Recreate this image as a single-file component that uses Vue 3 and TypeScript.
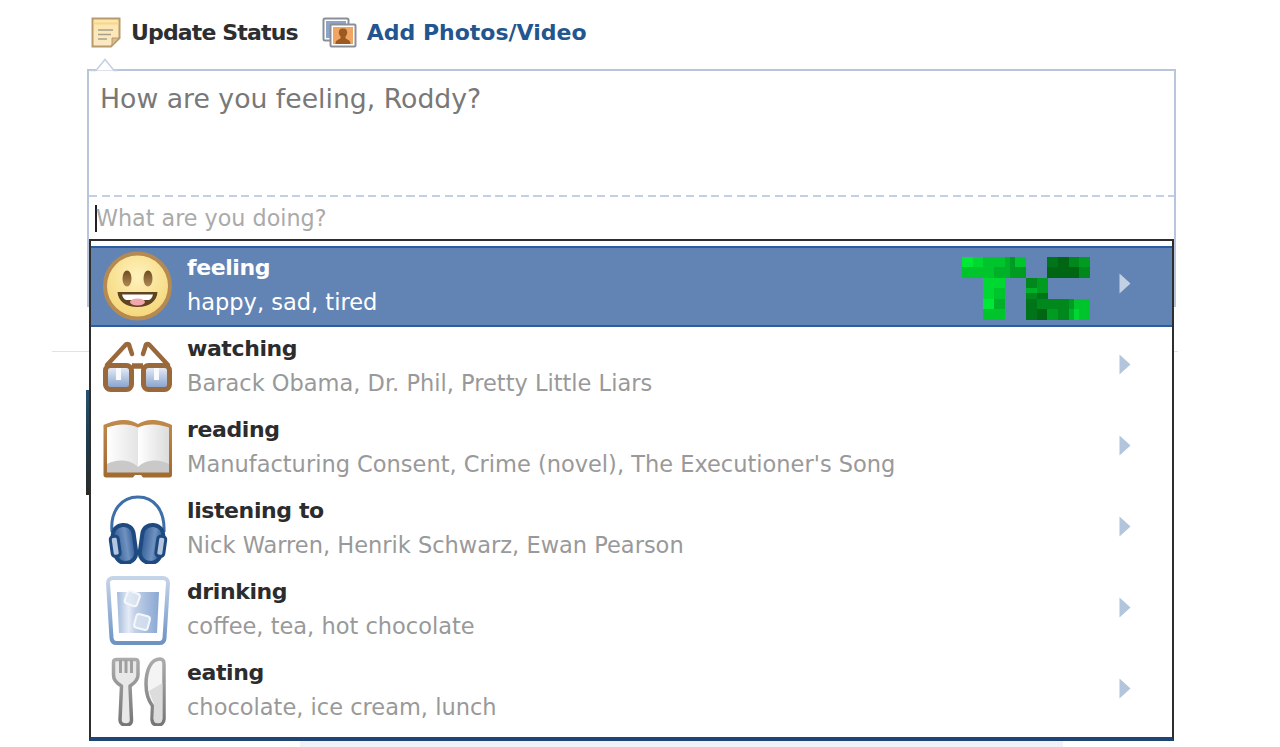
<script setup lang="ts">
interface Row {
  key: string
  title: string
  sub: string
}

const rows: Row[] = [
  { key: 'feeling', title: 'feeling', sub: 'happy, sad, tired' },
  { key: 'watching', title: 'watching', sub: 'Barack Obama, Dr. Phil, Pretty Little Liars' },
  { key: 'reading', title: 'reading', sub: "Manufacturing Consent, Crime (novel), The Executioner's Song" },
  { key: 'listening', title: 'listening to', sub: 'Nick Warren, Henrik Schwarz, Ewan Pearson' },
  { key: 'drinking', title: 'drinking', sub: 'coffee, tea, hot chocolate' },
  { key: 'eating', title: 'eating', sub: 'chocolate, ice cream, lunch' },
]

interface Cell {
  x: number
  y: number
  fill: string
}

const shades = ['#00e836', '#00d832', '#00c42c', '#00b028', '#009c22', '#00881d', '#007418', '#006614']

function zoneBase(c: number, r: number): number {
  if (c < 12) return c < 6 ? 1 : c > 8 ? 3 : 2
  if (c < 16) return r > 6 ? 6 : 4
  if (r < 4) return c > 21 ? 4 : 6
  return c > 20 ? 2 : 4
}

function inLogo(c: number, r: number): boolean {
  if (c < 12 && r < 4) return true
  if (c >= 4 && c < 8 && r >= 4) return true
  if (c >= 12 && c < 16 && r >= 4) return true
  if (c >= 16 && c < 24 && r < 4) return true
  if (c >= 16 && c < 24 && r >= 8) return true
  return false
}

const tcCells: Cell[] = []
for (let r = 0; r < 12; r++) {
  for (let c = 0; c < 24; c++) {
    if (!inLogo(c, r)) continue
    const bc = Math.floor(c / 2)
    const br = Math.floor(r / 2)
    const noise = ((bc * 7 + br * 13 + ((bc * br) % 5) * 3) % 5) - 2
    const i = Math.max(0, Math.min(7, zoneBase(c, r) + (noise > 0 ? 1 : noise < -1 ? -1 : 0)))
    tcCells.push({ x: c * 5.34, y: r * 5.2, fill: shades[i] })
  }
}
</script>

<template>
  <div class="page">
    <div class="tabs">
      <svg class="tab-icon" width="30" height="31" viewBox="0 0 30 31">
        <defs>
          <linearGradient id="noteFill" x1="0" y1="0" x2="0" y2="1">
            <stop offset="0" stop-color="#fde6a8" />
            <stop offset="1" stop-color="#fbe9c6" />
          </linearGradient>
        </defs>
        <path d="M1.500 1.500H28.500V21L20 29.500H1.500Z" fill="url(#noteFill)" stroke="#b99a6c" stroke-width="2" />
        <path d="M2.500 6.500H27.500" stroke="#f5d68c" stroke-width="2" />
        <path d="M7 13H22M7 17.500H20M7 22H16" stroke="#a89f8e" stroke-width="1.600" />
        <path d="M28 21H21V28.500Z" fill="#d9bd8a" stroke="#b99a6c" stroke-width="1" />
      </svg>
      <span class="tab active">Update Status</span>
      <svg class="tab-icon second" width="35" height="31" viewBox="0 0 35 31">
        <rect x="1.500" y="1.500" width="25" height="22" rx="1.500" fill="#fff" stroke="#8b8f95" stroke-width="2" />
        <rect x="4" y="4" width="20" height="17" fill="#8ea3c8" />
        <rect x="8.500" y="7.500" width="25" height="22" rx="1" fill="#fff" stroke="#8b8f95" stroke-width="2" />
        <rect x="11" y="10" width="20" height="17" fill="#f0a562" />
        <path d="M13.500 27C13.500 23 16.500 22.500 18.500 21.500V19.500C17 18 16.500 16 17 14C17.500 12 19 11.500 21 11.500C23 11.500 24.500 12 25 14C25.500 16 25 18 23.500 19.500V21.500C25.500 22.500 28.500 23 28.500 27Z" fill="#9a5a22" />
      </svg>
      <span class="tab link">Add Photos/Video</span>
    </div>

    <div class="composer">
      <svg class="notch" width="28" height="14" viewBox="0 0 28 14">
        <path d="M0 12.500H6L15 1.500L24 12.500H28" fill="#fff" stroke="#c3cfe2" stroke-width="1.500" />
      </svg>
      <div class="status-area">How are you feeling, Roddy?</div>
      <div class="dashes"></div>
      <div class="doing-area">
        <span class="caret"></span>
        <span class="doing-text">What are you doing?</span>
      </div>
    </div>

    <div class="rule"></div>
    <div class="photo-edge"></div>
    <div class="foot-band"></div>

    <div class="menu">
      <div v-for="row in rows" :key="row.key" class="row" :class="{ selected: row.key === 'feeling' }">
        <svg class="row-icon" width="70" height="70" viewBox="0 0 70 70">
          <template v-if="row.key === 'feeling'">
            <defs>
              <radialGradient id="faceFill" cx="0.5" cy="0.35" r="0.65">
                <stop offset="0" stop-color="#fff2bd" />
                <stop offset="1" stop-color="#f5d678" />
              </radialGradient>
              <linearGradient id="eyeFill" x1="0" y1="0" x2="0" y2="1">
                <stop offset="0" stop-color="#6e4c22" />
                <stop offset="1" stop-color="#b08a52" />
              </linearGradient>
            </defs>
            <circle cx="35.500" cy="35" r="32.500" fill="url(#faceFill)" stroke="#b48a52" stroke-width="4" />
            <ellipse cx="25" cy="27.500" rx="4.500" ry="8" fill="url(#eyeFill)" />
            <ellipse cx="46" cy="27.500" rx="4.500" ry="8" fill="url(#eyeFill)" />
            <path d="M15.500 41H55.500C55 50 47 56 35.500 56C24 56 16 50 15.500 41Z" fill="#5f4420" />
            <path d="M20 43.500H51C50 47 49 48 47 49H24C22 48 21 47 20 43.500Z" fill="#fff" />
            <ellipse cx="35.500" cy="51" rx="7.500" ry="3.500" fill="#f2a7ad" />
          </template>

          <template v-else-if="row.key === 'watching'">
            <defs>
              <linearGradient id="lensFill" x1="0" y1="0" x2="0" y2="1">
                <stop offset="0" stop-color="#eef2f9" />
                <stop offset="1" stop-color="#7f9dcb" />
              </linearGradient>
            </defs>
            <path d="M5 33L23 13.500C25 11 27.500 12 27.500 14.500L30 22M66 33L48 13.500C46 11 43.500 12 43.500 14.500L41 22" fill="none" stroke="#99693c" stroke-width="4.500" stroke-linecap="round" stroke-linejoin="round" />
            <rect x="3.500" y="33.500" width="26" height="24" rx="5" fill="url(#lensFill)" stroke="#99693c" stroke-width="5" />
            <rect x="41.500" y="33.500" width="26" height="24" rx="5" fill="url(#lensFill)" stroke="#99693c" stroke-width="5" />
            <path d="M14 36H19V48H14ZM52 36H57V48H52Z" fill="#f8fafd" />
            <path d="M30 34H41" stroke="#99693c" stroke-width="5.500" />
          </template>

          <template v-else-if="row.key === 'reading'">
            <defs>
              <linearGradient id="bookEdge" x1="0" y1="0" x2="0" y2="1">
                <stop offset="0" stop-color="#c08a4c" />
                <stop offset="1" stop-color="#a06a30" />
              </linearGradient>
              <linearGradient id="pageLeft" x1="0" y1="0" x2="1" y2="0">
                <stop offset="0" stop-color="#fff" />
                <stop offset="1" stop-color="#e4e4e4" />
              </linearGradient>
              <linearGradient id="pageRight" x1="0" y1="0" x2="1" y2="0">
                <stop offset="0" stop-color="#fff" />
                <stop offset="1" stop-color="#dcdcdc" />
              </linearGradient>
            </defs>
            <path d="M1.500 12C8 9.500 12 7.500 20 7C27 6.500 32 8.500 36 11C40 8.500 45 6.500 52 7C60 7.500 64 9.500 70 12V62C70 63.500 69 64.500 67.500 64.500H41L39 62H33L31 64.500H4C2.500 64.500 1.500 63.500 1.500 62Z" fill="url(#bookEdge)" />
            <path d="M5 14.500C12 12 26 9 36 14.500V58.500H5Z" fill="url(#pageLeft)" />
            <path d="M36 14.500C46 9 60 12 67 14.500V58.500H36Z" fill="url(#pageRight)" />
            <path d="M5 51C14 46 28 46 36 54C44 46 58 46 67 51V59.500H5Z" fill="#c9c9c9" />
          </template>

          <template v-else-if="row.key === 'listening'">
            <defs>
              <linearGradient id="cupFill" x1="0" y1="0" x2="1" y2="0">
                <stop offset="0" stop-color="#2f5c96" />
                <stop offset="0.6" stop-color="#7092c0" />
                <stop offset="1" stop-color="#2f5c96" />
              </linearGradient>
            </defs>
            <path d="M10 38C8 16 20 3 36 3C52 3 63 16 62 38" fill="none" stroke="#3f6fa8" stroke-width="3" />
            <g transform="rotate(-8 22 50)">
              <rect x="12" y="31" width="21" height="38" rx="10" fill="url(#cupFill)" stroke="#1f4a80" stroke-width="4" />
              <rect x="9" y="41" width="8" height="20" rx="3" fill="#b4c6e0" stroke="#1f4a80" stroke-width="3" />
            </g>
            <g transform="rotate(8 50 50)">
              <rect x="39" y="31" width="21" height="38" rx="10" fill="url(#cupFill)" stroke="#1f4a80" stroke-width="4" />
              <rect x="55" y="41" width="8" height="20" rx="3" fill="#b4c6e0" stroke="#1f4a80" stroke-width="3" />
            </g>
          </template>

          <template v-else-if="row.key === 'drinking'">
            <defs>
              <linearGradient id="glassEdge" x1="0" y1="0" x2="0" y2="1">
                <stop offset="0" stop-color="#c5d4e9" />
                <stop offset="1" stop-color="#6d93c5" />
              </linearGradient>
              <linearGradient id="drinkFill" x1="0" y1="0" x2="1" y2="0">
                <stop offset="0" stop-color="#a3b9dc" />
                <stop offset="0.28" stop-color="#e6ecf6" />
                <stop offset="0.42" stop-color="#c4d2e8" />
                <stop offset="1" stop-color="#8aa7d2" />
              </linearGradient>
            </defs>
            <path d="M11 3H61C64 3 66 5 66 8L62.500 63C62.300 66 60.500 68 57.500 68H14.500C11.500 68 9.700 66 9.500 63L6 8C6 5 8 3 11 3Z" fill="#fff" stroke="url(#glassEdge)" stroke-width="4" />
            <path d="M15 17H57L55 58H17Z" fill="url(#drinkFill)" />
            <rect x="24" y="17" width="13" height="13" rx="3" transform="rotate(20 30 23)" fill="#dfe7f3" fill-opacity="0.800" stroke="#f4f7fb" stroke-width="2" />
            <rect x="33" y="40" width="14" height="14" rx="3" transform="rotate(15 40 47)" fill="#d9e3f1" fill-opacity="0.800" stroke="#f4f7fb" stroke-width="2" />
          </template>

          <template v-else>
            <defs>
              <linearGradient id="metalEdge" x1="0" y1="0" x2="0" y2="1">
                <stop offset="0" stop-color="#ababab" />
                <stop offset="1" stop-color="#767676" />
              </linearGradient>
            </defs>
            <path d="M11.500 6C11.500 4 13 3.500 15 3.500H33C35 3.500 36 4 36 6V19C36 25 31 28 28 30L29.500 64C29.500 67.500 27 69 24 69C21 69 18 67.500 18 64L19.500 30C16 28 11.500 25 11.500 19Z" fill="#e8e8e8" stroke="url(#metalEdge)" stroke-width="3.500" stroke-linejoin="round" />
            <path d="M18.500 4V17M24 4V17M29.500 4V17" stroke="#a0a0a0" stroke-width="3" />
            <path d="M44 28C44 14 49 3 58 3C61 3 62 5 62 8V63C62 67 59 69 56 69C52 69 50 66.500 50 63L50.500 50C46 44 44 36 44 28Z" fill="#f4f4f4" stroke="url(#metalEdge)" stroke-width="3.500" stroke-linejoin="round" />
            <path d="M47 35L60.500 27V62C60.500 65 58.500 67 56 67C53 67 51.500 65 51.500 62L52 48Z" fill="#dcdcdc" />
          </template>
        </svg>
        <div class="row-text">
          <div class="row-title">{{ row.title }}</div>
          <div class="row-sub">{{ row.sub }}</div>
        </div>
        <svg
          v-if="row.key === 'feeling'"
          class="tc-logo"
          width="129"
          height="63"
          viewBox="0 0 129 63"
          shape-rendering="crispEdges"
        >
          <rect v-for="(cell, i) in tcCells" :key="i" :x="cell.x" :y="cell.y" width="5.500" height="5.400" :fill="cell.fill" />
        </svg>
        <svg class="chevron" width="12" height="21" viewBox="0 0 12 21">
          <path d="M0.500 0.500L11.500 10.500L0.500 20.500Z" />
        </svg>
      </div>
    </div>
  </div>
</template>

<style>
html,
body {
  margin: 0;
  background: #fff;
}
</style>

<style scoped>
.page {
  position: relative;
  width: 1280px;
  height: 747px;
  overflow: hidden;
  box-sizing: border-box;
  padding: 17px 0 0 87px;
  background: #fff;
  font-family: "DejaVu Sans", "Liberation Sans", sans-serif;
}

.tabs {
  display: flex;
  align-items: center;
  height: 31px;
  padding-left: 4px;
}

.tab {
  font-size: 22px;
  font-weight: 700;
  line-height: 31px;
  margin-left: 10px;
}

.tab.active {
  color: #2e2e30;
  letter-spacing: -0.85px;
}

.tab.link {
  color: #23558f;
}

.tab-icon.second {
  margin-left: 24px;
}

.composer {
  position: relative;
  width: 1089px;
  height: 238px;
  margin-top: 21px;
  box-sizing: border-box;
  border: solid #b9c5db;
  border-width: 2px 2px 0;
}

.notch {
  position: absolute;
  left: 1px;
  top: -13px;
}

.status-area {
  height: 124px;
  box-sizing: border-box;
  padding: 11px 0 0 11px;
  font-size: 26.7px;
  line-height: 34px;
  color: #787878;
}

.dashes {
  height: 2px;
  background: repeating-linear-gradient(90deg, #c3cfe2 0 8px, transparent 8px 12.7px);
}

.doing-area {
  display: flex;
  align-items: center;
  height: 42px;
  padding-left: 6px;
}

.caret {
  width: 2px;
  height: 27px;
  background: #222;
}

.doing-text {
  margin-left: -1px;
  font-size: 22.25px;
  line-height: 28px;
  color: #aaa;
}

.rule {
  width: 1126px;
  height: 1px;
  margin: 44px 0 0 -35px;
  background: #dfe2e8;
}

.photo-edge {
  width: 3px;
  height: 105px;
  margin: 38px 0 0 -1px;
  background: linear-gradient(#27506e, #1f3a4c 50%, #2b2a28);
}

.foot-band {
  width: 763px;
  height: 6px;
  margin: 246px 0 0 213px;
  background: #f0f2f7;
}

.menu {
  position: absolute;
  left: 89px;
  top: 239px;
  width: 1085px;
  box-sizing: border-box;
  padding: 5px 0;
  background: #fff;
  border: solid #2e2e2e;
  border-width: 2px 2px 0;
  border-bottom: 4px solid #1f4578;
}

.row {
  position: relative;
  display: flex;
  align-items: center;
  height: 81px;
  box-sizing: border-box;
  padding: 0 41px 0 11px;
}

.row.selected {
  background: #6284b4;
  border-top: 2px solid #2f5ca0;
  border-bottom: 2px solid #2f5ca0;
}

.row-icon {
  flex: none;
  width: 70px;
  height: 70px;
  margin-top: -2px;
}

.row-text {
  flex: 1;
  margin: -4px 0 0 15px;
}

.row-title {
  font-size: 22px;
  font-weight: 700;
  line-height: 34px;
  letter-spacing: -0.4px;
  color: #2c2c2e;
}

.row-sub {
  font-size: 22.5px;
  line-height: 34px;
  color: #999;
}

.selected .row-title,
.selected .row-sub {
  color: #fff;
}

.tc-logo {
  position: absolute;
  left: 871px;
  top: 9px;
  filter: blur(0.5px);
}

.chevron {
  flex: none;
  margin-top: -6px;
  fill: #b3c4dd;
}

.selected .chevron {
  fill: #c2d0e5;
}
</style>
